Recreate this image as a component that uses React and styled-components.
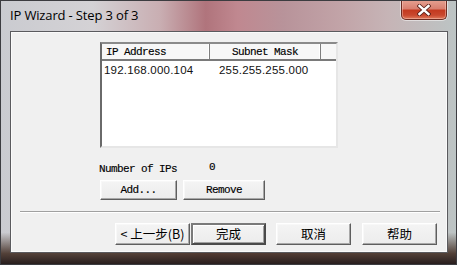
import React from "react";
import styled, { createGlobalStyle } from "styled-components";

const GlobalStyle = createGlobalStyle`
  html, body {
    margin: 0;
    padding: 0;
    background: #ffffff;
  }
  * {
    box-sizing: border-box;
  }
`;

const Window = styled.div`
  width: 457px;
  height: 265px;
  display: flex;
  flex-direction: column;
  border: 1px solid #3c3c40;
  background:
    linear-gradient(to bottom, rgba(0, 0, 0, 0) 0, rgba(0, 0, 0, 0) 88%, rgba(70, 50, 40, 0.9) 96%, rgba(40, 30, 30, 1) 100%),
    linear-gradient(
      to right,
      #cacbd0 0%,
      #d4d2d5 20%,
      #c9aeb2 35%,
      #b0747c 45%,
      #c08890 52%,
      #b8939a 62%,
      #c2a4a8 75%,
      #c6b4b6 85%,
      #bcc4c4 100%
    );
  overflow: hidden;
`;

const TitleBar = styled.div`
  height: 30px;
  display: flex;
  align-items: flex-start;
  justify-content: space-between;
  padding: 0 9px 0 9px;
`;

const Title = styled.span`
  margin-top: 5px;
  font-family: "Open Sans", "Noto Sans", sans-serif;
  font-size: 13px;
  color: #000;
  letter-spacing: -0.15px;
`;

const CloseButton = styled.div`
  width: 46px;
  height: 20px;
  margin-top: -1px;
  display: flex;
  align-items: center;
  justify-content: center;
  border: 1px solid #6e2c22;
  border-top: none;
  border-radius: 0 0 5px 5px;
  box-shadow: 0 0 0 1px rgba(255, 255, 255, 0.5), inset 0 0 0 1px rgba(255, 220, 210, 0.4);
  background: linear-gradient(to bottom, #e6a292 0%, #d98070 45%, #c43a20 55%, #c9482e 80%, #e07a5c 100%);
`;

const Frame = styled.div`
  flex: 1;
  display: flex;
  padding: 0 8px 11px 9px;
`;

const Client = styled.div`
  flex: 1;
  display: flex;
  flex-direction: column;
  background: #f0f0f0;
  border: 1px solid #5a5a5e;
  box-shadow: inset 0 0 0 1px #fafafa;
`;

const Main = styled.div`
  padding: 10px 0 0 89px;
  display: flex;
  flex-direction: column;
`;

const ListBox = styled.div`
  width: 238px;
  height: 106px;
  background: #ffffff;
  border-style: solid;
  border-width: 2px;
  border-color: #8a8a8a #e6e6e6 #e6e6e6 #6a6a6a;
  display: flex;
  flex-direction: column;
`;

const HeaderRow = styled.div`
  height: 17px;
  display: flex;
  border-bottom: 2px solid #7a7a7a;
  background: #f7f7f7;
`;

const HeaderCell = styled.div`
  width: ${(p) => p.$w}px;
  flex: ${(p) => (p.$w ? "none" : "1")};
  display: flex;
  align-items: center;
  justify-content: ${(p) => (p.$center ? "center" : "flex-start")};
  padding-left: ${(p) => (p.$center ? 0 : 4)}px;
  border-right: ${(p) => (p.$w ? "1px solid #7e7e7e" : "none")};
  box-shadow: ${(p) => (p.$w ? "inset -1px 0 0 #ffffff" : "none")};
`;

const Mono = styled.span`
  font-family: "Liberation Mono", "DejaVu Sans Mono", monospace;
  font-size: 11px;
  letter-spacing: -0.6px;
  color: #000;
  line-height: 12px;
  white-space: pre;
  -webkit-text-stroke: 0.15px #000;
`;

const DataRow = styled.div`
  display: flex;
  height: 14px;
  align-items: center;
  margin-top: 1px;
`;

const DataCell = styled.div`
  width: ${(p) => p.$w}px;
  padding-left: ${(p) => p.$pad}px;
`;

const Digits = styled.span`
  font-family: "Liberation Sans", Arial, sans-serif;
  font-size: 11.5px;
  letter-spacing: 0.2px;
  color: #111;
`;

const CountRow = styled.div`
  margin-top: 13px;
  display: flex;
  align-items: center;
  height: 12px;
`;

const CountLabel = styled.div`
  width: 110px;
  margin-left: -1px;
`;

const ButtonRow = styled.div`
  margin-top: 7px;
  display: flex;
  gap: 6px;
`;

const Button = styled.div`
  width: ${(p) => p.$w}px;
  height: ${(p) => p.$h || 20}px;
  display: flex;
  align-items: center;
  justify-content: center;
  background: linear-gradient(to bottom, #f4f4f4 0%, #ececec 100%);
  border-style: solid;
  border-width: ${(p) => (p.$default ? 2 : 1)}px;
  border-color: ${(p) =>
    p.$default ? "#7a7a7a #4a4a4a #4a4a4a #7a7a7a" : "#ffffff #5e5e5e #5e5e5e #ffffff"};
  box-shadow: ${(p) =>
    p.$default ? "inset 1px 1px 0 #ffffff, inset -1px -1px 0 #a0a0a0" : "inset -1px -1px 0 #a8a8a8, inset 1px 1px 0 #f8f8f8"};
`;

const Separator = styled.div`
  margin: 11px 7px 0 9px;
  height: 2px;
  border-top: 1px solid #a0a0a0;
  border-bottom: 1px solid #ffffff;
`;

const Footer = styled.div`
  margin-top: 10px;
  display: flex;
  justify-content: flex-end;
  padding-right: 10px;
`;

const FooterGroup = styled.div`
  display: flex;
  gap: ${(p) => p.$gap}px;
  margin-left: 10px;
`;

const Cjk = styled.span`
  font-family: "Noto Sans CJK SC", "Noto Sans", sans-serif;
  font-size: 12.5px;
  color: #000;
  line-height: 14px;
  white-space: pre;
`;

function CloseX() {
  return (
    <svg width="14" height="12" viewBox="0 0 14 12">
      <path
        d="M2.5 2 L7 6 L11.5 2 M2.5 10 L7 6 L11.5 10"
        stroke="#5a2018"
        strokeWidth="4.2"
        fill="none"
        strokeLinecap="square"
      />
      <path
        d="M2.5 2 L7 6 L11.5 2 M2.5 10 L7 6 L11.5 10"
        stroke="#ffffff"
        strokeWidth="2.4"
        fill="none"
        strokeLinecap="square"
      />
    </svg>
  );
}

export default function App() {
  return (
    <>
      <GlobalStyle />
      <Window>
        <TitleBar>
          <Title>IP Wizard - Step 3 of 3</Title>
          <CloseButton>
            <CloseX />
          </CloseButton>
        </TitleBar>
        <Frame>
          <Client>
            <Main>
              <ListBox>
                <HeaderRow>
                  <HeaderCell $w={108}>
                    <Mono>IP Address</Mono>
                  </HeaderCell>
                  <HeaderCell $w={111} $center>
                    <Mono>Subnet Mask</Mono>
                  </HeaderCell>
                  <HeaderCell />
                </HeaderRow>
                <DataRow>
                  <DataCell $w={108} $pad={2}>
                    <Digits>192.168.000.104</Digits>
                  </DataCell>
                  <DataCell $w={111} $pad={9}>
                    <Digits>255.255.255.000</Digits>
                  </DataCell>
                </DataRow>
              </ListBox>
              <CountRow>
                <CountLabel>
                  <Mono>Number of IPs</Mono>
                </CountLabel>
                <Mono>0</Mono>
              </CountRow>
              <ButtonRow>
                <Button $w={77}>
                  <Mono>Add...</Mono>
                </Button>
                <Button $w={82}>
                  <Mono>Remove</Mono>
                </Button>
              </ButtonRow>
            </Main>
            <Separator />
            <Footer>
              <FooterGroup $gap={1}>
                <Button $w={75} $h={22}>
                  <Cjk>&lt; 上一步(B)</Cjk>
                </Button>
                <Button $w={75} $h={22} $default>
                  <Cjk>完成</Cjk>
                </Button>
              </FooterGroup>
              <FooterGroup $gap={11}>
                <Button $w={75} $h={22}>
                  <Cjk>取消</Cjk>
                </Button>
                <Button $w={75} $h={22}>
                  <Cjk>帮助</Cjk>
                </Button>
              </FooterGroup>
            </Footer>
          </Client>
        </Frame>
      </Window>
    </>
  );
}
